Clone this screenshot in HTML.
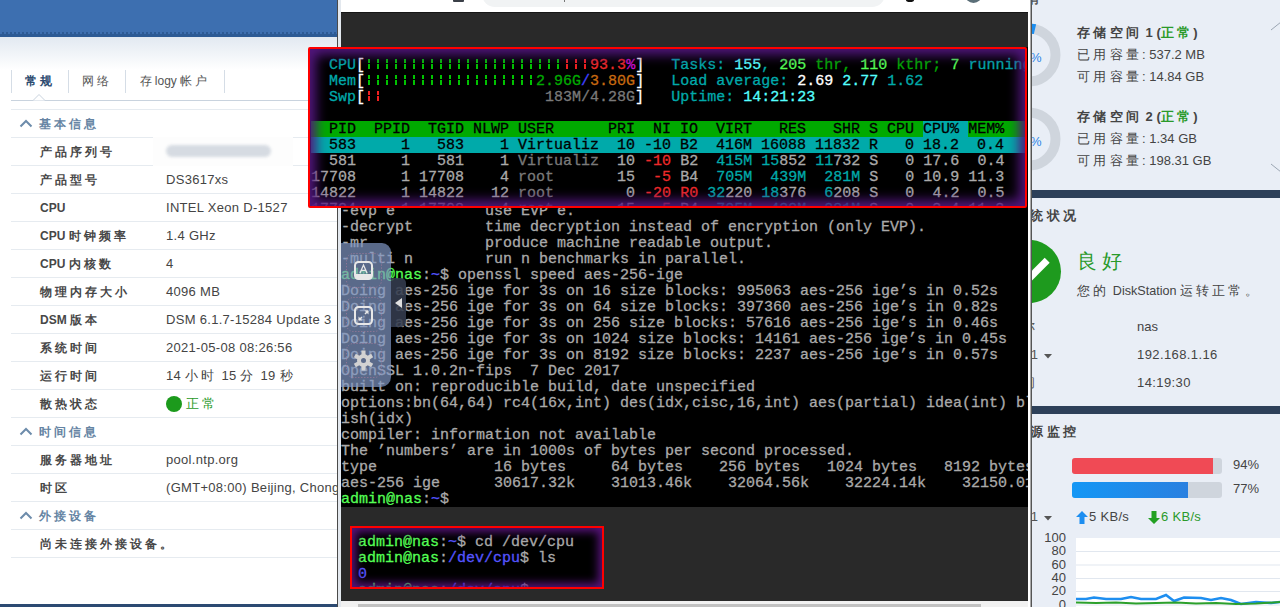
<!DOCTYPE html>
<html><head><meta charset="utf-8">
<style>
*{margin:0;padding:0;box-sizing:border-box}
html,body{width:1280px;height:607px;overflow:hidden;background:#fff;font-family:"Liberation Sans",sans-serif}
.abs{position:absolute}
.c{letter-spacing:0.25em}
/* left panel */
#left{position:absolute;left:0;top:0;width:337px;height:607px;background:#fff;overflow:hidden}
#left .hdr{position:absolute;left:0;top:0;width:337px;height:37px;background:#3d6fb0;border-bottom:3px solid #2c5a94}
#left .dith{position:absolute;left:0;top:32px;width:337px;height:2px;background:repeating-linear-gradient(90deg,#3d6fb0 0 2px,#2c5a94 2px 4px)}
#left .grad{position:absolute;left:0;top:37px;width:337px;height:33px;background:linear-gradient(#e2e9f1,#fff)}
#left .bot{position:absolute;left:0;top:604px;width:337px;height:3px;background:#2c4a72}
.tab{position:absolute;top:70px;height:23px;border-left:1px solid #d5dde6;font-size:12px;line-height:23px;color:#555;text-align:center}
.tabline{position:absolute;left:11px;top:100px;width:327px;height:1px;background:#c9d3de}
.row{position:absolute;left:11px;width:327px;height:28px;border-top:1px solid #e6ebf0;font-size:12px;line-height:27px}
.row .l{position:absolute;left:29px;top:1px;color:#474747;font-weight:bold}
.row .v{position:absolute;left:155px;top:0;color:#444;white-space:nowrap;font-size:13px;letter-spacing:0.3px}
.row.sec .l{left:28px;top:1px;color:#6584a3;font-weight:bold}
.row.sec .car{position:absolute;left:8px;top:9px}
.row .dot{position:absolute;left:155px;top:6px;width:16px;height:16px;border-radius:50%;background:#1c9a1c}
.redact{position:absolute;left:153px;top:137px;width:140px;height:29px;background:#fdfdfd}
.redact .pill{position:absolute;left:13px;top:8px;width:105px;height:12px;border-radius:6px;background:#d6dbe2;filter:blur(1.5px)}
/* terminal */
#term{position:absolute;left:338px;top:0;width:693px;height:607px;background:#f0f0f0}
#term .bl{position:absolute;left:0;top:0;width:3px;height:607px;background:#e3e8ee;border-left:1px solid #4a4a4a}
#term .bl{left:-1px;width:4px}
#term .br{position:absolute;left:690px;top:0;width:3px;height:607px;background:#fff;border-right:1px solid #a9a9a9}
#term .topbar{position:absolute;left:3px;top:0;width:687px;height:12px;background:#fff}
#term .dark{position:absolute;left:3px;top:12px;width:687px;height:589px;background:#292929;border-top:1px solid #161616}
#term .black{position:absolute;left:3px;top:47px;width:687px;height:460px;background:#000}
#term .sb{position:absolute;left:3px;top:602px;width:687px;height:5px;background:#f1f1f1}
#term .thumb{position:absolute;left:20px;top:604px;width:623px;height:3px;background:#c1c1c1}
pre{font-family:"Liberation Mono",monospace;font-size:15px;line-height:16px;white-space:pre;-webkit-text-stroke:0.3px}
#tx{position:absolute;color:#aaa}

#tclip{position:absolute;left:341px;top:47px;width:687px;height:460px;overflow:hidden}
#tclip #tx{left:0;top:157px}
#htop{position:absolute;left:308px;top:47px;width:719px;height:161px;border:2px solid #ff0000;border-radius:2px;background:#000;overflow:hidden}
#htop .hg{position:absolute;left:1px;top:72px;width:720px;height:16px;background:#00aa00}
#htop .hc{position:absolute;left:613px;top:72px;width:45px;height:16px;background:#00aaaa}
#htop .hr1{position:absolute;left:1px;top:88px;width:720px;height:16px;background:#00aaaa}
#htop .bar{position:absolute}
#hp{position:absolute;left:1px;top:9px;color:#aaa}
#htop .glow{position:absolute;left:0;top:0;right:0;bottom:0;box-shadow:inset 0 0 12px 6px rgba(82,22,125,1)}
#pop2{position:absolute;left:350px;top:526px;width:254px;height:63px;border:2px solid #ff0000;background:#000;overflow:hidden}
#p2{position:absolute;left:6px;top:7px;color:#aaa}
#pop2 .glow2{position:absolute;left:0;top:0;right:0;bottom:0;box-shadow:inset 0 0 9px 4px rgba(90,20,125,0.95)}
#tbar{position:absolute;left:341px;top:243px;width:50px;height:144px;background:rgba(128,151,197,0.7);border-radius:0 9px 10px 0}
#ttab{position:absolute;left:391px;top:278px;width:15px;height:49px;background:rgba(52,60,78,0.88);border-radius:0 5px 5px 0}
#topicons{}
/* right */
#right{position:absolute;left:1031px;top:0;width:249px;height:607px;background:#e9eef6;overflow:hidden;border-left:1px solid #555}
#right .rt{position:absolute;white-space:nowrap;font-size:13px;line-height:16px;color:#444}
#right .lab{right:auto;left:auto;color:#555;transform:translateX(-100%);left:6px}
#right .b{font-weight:bold;font-size:13px}
#right .rbar{position:absolute;left:0;width:249px;height:8px;background:#2d4059}
#right .gcirc{position:absolute;left:-34px;top:240px;width:63px;height:63px;border-radius:50%;background:#1e9a1e;overflow:hidden}
#right .gcirc:after{content:"";position:absolute;left:27px;top:26px;width:26px;height:7px;background:#fff;transform:rotate(-45deg)}
#right .pbar{position:absolute;left:40px;width:150px;height:16px;background:#cfd5dd;border-radius:3px;overflow:hidden}
#right .pbar div{height:16px}
#right .chart{position:absolute;left:44px;top:538px;width:205px;height:69px;background:#fff}
#right .ylab{position:absolute;left:0;width:34px;text-align:right;font-size:13px;line-height:14px;color:#444}

</style></head><body>
<div id="left">
  <div class="hdr"></div><div class="dith"></div>
  <div class="grad"></div>
  <div class="tab" style="left:11px;width:57px;color:#2d4b70;font-weight:bold"><span class="c">常规</span></div>
  <div class="tab" style="left:68px;width:57px"><span class="c">网络</span></div>
  <div class="tab" style="left:125px;width:99px"><span class="c">存</span>logy <span class="c">帐户</span></div>
  <div class="tab" style="left:224px;width:1px"></div>
  <div class="tabline"></div>
  <svg class="abs" style="left:28px;top:93px" width="22" height="9" viewBox="0 0 22 9"><path d="M0 7.5 L5 7.5 L11 1.5 L17 7.5 L22 7.5" fill="#fff" stroke="#c9d3de" stroke-width="1"/></svg>
  <div class="row sec" style="top:109px"><svg class="car" width="14" height="9" viewBox="0 0 14 9"><path d="M1.5 7.5 L7 2 L12.5 7.5" fill="none" stroke="#6d8cab" stroke-width="2"/></svg><span class="l"><span class="c">基本信息</span></span></div>
  <div class="row" style="top:137px"><span class="l"><span class="c">产品序列号</span></span></div>
  <div class="row" style="top:165px"><span class="l"><span class="c">产品型号</span></span><span class="v">DS3617xs</span></div>
  <div class="row" style="top:193px"><span class="l">CPU</span><span class="v">INTEL Xeon D-1527</span></div>
  <div class="row" style="top:221px"><span class="l">CPU <span class="c">时钟频率</span></span><span class="v">1.4 GHz</span></div>
  <div class="row" style="top:249px"><span class="l">CPU <span class="c">内核数</span></span><span class="v">4</span></div>
  <div class="row" style="top:277px"><span class="l"><span class="c">物理内存大小</span></span><span class="v">4096 MB</span></div>
  <div class="row" style="top:305px"><span class="l">DSM <span class="c">版本</span></span><span class="v">DSM 6.1.7-15284 Update 3</span></div>
  <div class="row" style="top:333px"><span class="l"><span class="c">系统时间</span></span><span class="v">2021-05-08 08:26:56</span></div>
  <div class="row" style="top:361px"><span class="l"><span class="c">运行时间</span></span><span class="v">14 <span class="c">小时</span> 15 <span class="c">分</span> 19 <span class="c">秒</span></span></div>
  <div class="row" style="top:389px"><span class="l"><span class="c">散热状态</span></span><span class="dot"></span><span class="v" style="left:175px;color:#2a9a2a;letter-spacing:0"><span class="c">正常</span></span></div>
  <div class="row sec" style="top:417px"><svg class="car" width="14" height="9" viewBox="0 0 14 9"><path d="M1.5 7.5 L7 2 L12.5 7.5" fill="none" stroke="#6d8cab" stroke-width="2"/></svg><span class="l"><span class="c">时间信息</span></span></div>
  <div class="row" style="top:445px"><span class="l"><span class="c">服务器地址</span></span><span class="v">pool.ntp.org</span></div>
  <div class="row" style="top:473px"><span class="l"><span class="c">时区</span></span><span class="v">(GMT+08:00) Beijing, Chongqing</span></div>
  <div class="row sec" style="top:501px"><svg class="car" width="14" height="9" viewBox="0 0 14 9"><path d="M1.5 7.5 L7 2 L12.5 7.5" fill="none" stroke="#6d8cab" stroke-width="2"/></svg><span class="l"><span class="c">外接设备</span></span></div>
  <div class="row" style="top:529px"><span class="l"><span class="c">尚未连接外接设备。</span></span></div>
  <div class="row" style="top:557px"></div>
  <div class="redact"><div class="pill"></div></div>
  <div class="bot"></div>
</div>
<div id="term">
  <div class="bl"></div><div class="br"></div>
  <div class="topbar"></div>
  <div class="abs" style="left:115px;top:0;width:11px;height:2px;background:#3a3f47;border-radius:0 0 1px 1px"></div>
  <div class="abs" style="left:144px;top:-20px;width:403px;height:27px;background:#f1f3f4;border-radius:13px"></div>
  <div class="abs" style="left:226px;top:0;width:1px;height:2px;background:#777"></div>
  <div class="abs" style="left:568px;top:-2px;width:8px;height:4px;background:#111;border-radius:50%"></div>
  <div class="abs" style="left:627px;top:-14px;width:17px;height:17px;background:#5b6f78;border-radius:50%"></div>
  
  <div class="dark"></div>
  <div class="black"></div>
  <div class="sb"></div><div class="thumb"></div>
</div>
<div id="tclip"><pre id="tx">-evp e          use EVP e.
-decrypt        time decryption instead of encryption (only EVP).
-mr             produce machine readable output.
-multi n        run n benchmarks in parallel.
<span style="color:#55ff55">admin@nas</span>:<span style="color:#5555ff">~</span>$ openssl speed aes-256-ige
Doing aes-256 ige for 3s on 16 size blocks: 995063 aes-256 ige’s in 0.52s
Doing aes-256 ige for 3s on 64 size blocks: 397360 aes-256 ige’s in 0.82s
Doing aes-256 ige for 3s on 256 size blocks: 57616 aes-256 ige’s in 0.46s
Doing aes-256 ige for 3s on 1024 size blocks: 14161 aes-256 ige’s in 0.45s
Doing aes-256 ige for 3s on 8192 size blocks: 2237 aes-256 ige’s in 0.57s
OpenSSL 1.0.2n-fips  7 Dec 2017
built on: reproducible build, date unspecified
options:bn(64,64) rc4(16x,int) des(idx,cisc,16,int) aes(partial) idea(int) bl
ish(idx)
compiler: information not available
The ’numbers’ are in 1000s of bytes per second processed.
type             16 bytes     64 bytes    256 bytes   1024 bytes   8192 bytes
aes-256 ige      30617.32k    31013.46k    32064.56k    32224.14k    32150.01k
<span style="color:#55ff55">admin@nas</span>:<span style="color:#5555ff">~</span>$
</pre></div>
<div id="htop"><div class="hg"></div><div class="hc"></div><div class="hr1"></div><div class="bar" style="left:55px;top:10px;width:198px;height:4px;background:repeating-linear-gradient(90deg,transparent 0 3px,#00c400 3px 5px,transparent 5px 9px)"></div><div class="bar" style="left:55px;top:15px;width:198px;height:5px;background:repeating-linear-gradient(90deg,transparent 0 3px,#00c400 3px 5px,transparent 5px 9px)"></div><div class="bar" style="left:253px;top:10px;width:27px;height:4px;background:repeating-linear-gradient(90deg,transparent 0 3px,#f02020 3px 5px,transparent 5px 9px)"></div><div class="bar" style="left:253px;top:15px;width:27px;height:5px;background:repeating-linear-gradient(90deg,transparent 0 3px,#f02020 3px 5px,transparent 5px 9px)"></div><div class="bar" style="left:55px;top:26px;width:171px;height:4px;background:repeating-linear-gradient(90deg,transparent 0 3px,#00c400 3px 5px,transparent 5px 9px)"></div><div class="bar" style="left:55px;top:31px;width:171px;height:5px;background:repeating-linear-gradient(90deg,transparent 0 3px,#00c400 3px 5px,transparent 5px 9px)"></div><div class="bar" style="left:55px;top:42px;width:18px;height:4px;background:repeating-linear-gradient(90deg,transparent 0 3px,#f02020 3px 5px,transparent 5px 9px)"></div><div class="bar" style="left:55px;top:47px;width:18px;height:5px;background:repeating-linear-gradient(90deg,transparent 0 3px,#f02020 3px 5px,transparent 5px 9px)"></div><pre id="hp">  <span style="color:#00aaaa">CPU</span><span style="color:#ffffff">[</span><span style="color:#00aa00">                      </span><span style="color:#ee2a2a">   </span><span style="color:#ee2a2a">93.3</span><span style="color:#cc10cc">%</span><span style="color:#ffffff">]</span>   <span style="color:#00aaaa">Tasks:</span> <span style="color:#55ffff">155</span><span style="color:#00aaaa">,</span> <span style="color:#55ff55">205</span> <span style="color:#00aa00">thr,</span> <span style="color:#55ff55">110</span> <span style="color:#00aa00">kthr;</span> <span style="color:#55ff55">7</span> <span style="color:#00aaaa">running</span>
  <span style="color:#00aaaa">Mem</span><span style="color:#ffffff">[</span><span style="color:#00aa00">                   </span><span style="color:#00aa00">2.96G</span><span style="color:#4040ff">/</span><span style="color:#c86a10">3.80G</span><span style="color:#ffffff">]</span>   <span style="color:#00aaaa">Load average:</span> <span style="color:#ffffff">2.69</span> <span style="color:#55ffff">2.77</span> <span style="color:#00aaaa">1.62</span>
  <span style="color:#00aaaa">Swp</span><span style="color:#ffffff">[</span><span style="color:#ee2a2a">  </span>                  <span style="color:#7a7a7a">183M/4.28G</span><span style="color:#ffffff">]</span>   <span style="color:#00aaaa">Uptime:</span> <span style="color:#55ffff">14:21:23</span>

<span style="color:#000">  PID  PPID  TGID NLWP USER      PRI  NI IO  VIRT   RES   SHR S CPU </span><span style="color:#000">CPU%</span><span style="color:#000"> MEM%  </span>
<span style="color:#000">  583     1   583    1 Virtualiz  10 -10 B2  416M 16088 11832 R   0 18.2  0.4  </span>
<span style="color:#aaaaaa">  581     1   581    1 </span><span style="color:#7a7a7a">Virtualiz</span> <span style="color:#aaaaaa"> 10</span> <span style="color:#ee2a2a">-10</span> <span style="color:#aaaaaa">B2</span> <span style="color:#00aaaa"> 415M</span> <span style="color:#00aaaa">15</span><span style="color:#aaaaaa">852</span> <span style="color:#00aaaa">11</span><span style="color:#aaaaaa">732</span> <span style="color:#aaaaaa">S</span> <span style="color:#aaaaaa">  0</span> <span style="color:#aaaaaa">17.6</span> <span style="color:#aaaaaa"> 0.4</span>
<span style="color:#aaaaaa">17708     1 17708    4 </span><span style="color:#7a7a7a">root     </span> <span style="color:#aaaaaa"> 15</span> <span style="color:#ee2a2a"> -5</span> <span style="color:#aaaaaa">B4</span> <span style="color:#00aaaa"> 705M</span> <span style="color:#00aaaa"> 439M</span> <span style="color:#00aaaa"> 281M</span> <span style="color:#aaaaaa">S</span> <span style="color:#aaaaaa">  0</span> <span style="color:#aaaaaa">10.9</span> <span style="color:#aaaaaa">11.3</span>
<span style="color:#aaaaaa">14822     1 14822   12 </span><span style="color:#7a7a7a">root     </span> <span style="color:#aaaaaa">  0</span> <span style="color:#ee2a2a">-20</span> <span style="color:#ee2a2a">R0</span> <span style="color:#00aaaa">32</span><span style="color:#aaaaaa">220</span> <span style="color:#00aaaa">18</span><span style="color:#aaaaaa">376</span>  <span style="color:#00aaaa">6</span><span style="color:#aaaaaa">208</span> <span style="color:#aaaaaa">S</span> <span style="color:#aaaaaa">  0</span> <span style="color:#aaaaaa"> 4.2</span> <span style="color:#aaaaaa"> 0.5</span>
<span style="color:#aaaaaa">17724     1 17708    4 </span><span style="color:#7a7a7a">root     </span> <span style="color:#aaaaaa"> 15</span> <span style="color:#ee2a2a"> -5</span> <span style="color:#aaaaaa">B4</span> <span style="color:#00aaaa"> 705M</span> <span style="color:#00aaaa"> 439M</span> <span style="color:#00aaaa"> 281M</span> <span style="color:#aaaaaa">S</span> <span style="color:#aaaaaa">  0</span> <span style="color:#aaaaaa"> 3.4</span> <span style="color:#aaaaaa">11.3</span></pre><div class="glow"></div></div>
<div id="tbar">
  <svg class="abs" style="left:5px;top:10px" width="36" height="36"><rect x="0.5" y="0.5" width="35" height="34" rx="7" fill="none" stroke="#a07a9a" stroke-width="1" stroke-dasharray="1 2"/></svg>
  <svg class="abs" style="left:13px;top:18px" width="19" height="19" viewBox="0 0 19 19"><rect x="1" y="1" width="17" height="17" rx="3.5" fill="none" stroke="#e8e8e8" stroke-width="2"/><rect x="2" y="13" width="15" height="4" fill="#e8e8e8"/><path d="M6 12 L9.5 4 L13 12 M7.3 9.3 H11.7" fill="none" stroke="#e8e8e8" stroke-width="1.3"/></svg>
  <svg class="abs" style="left:5px;top:54px" width="36" height="36"><rect x="0.5" y="0.5" width="35" height="34" rx="7" fill="none" stroke="#a07a9a" stroke-width="1" stroke-dasharray="1 2"/></svg>
  <svg class="abs" style="left:13px;top:63px" width="19" height="19" viewBox="0 0 19 19"><rect x="1" y="1" width="17" height="17" rx="3.5" fill="none" stroke="#e8e8e8" stroke-width="2"/><path d="M10.5 4.5 H14.5 V8.5 Z M8.5 14.5 H4.5 V10.5 Z" fill="#e8e8e8"/><path d="M14 5 L11 8 M5 14 L8 11" stroke="#e8e8e8" stroke-width="1.5"/></svg>
  <svg class="abs" style="left:5px;top:100px" width="36" height="36"><rect x="0.5" y="0.5" width="35" height="34" rx="7" fill="none" stroke="#a07a9a" stroke-width="1" stroke-dasharray="1 2"/></svg>
  <svg class="abs" style="left:12px;top:107px" width="21" height="21" viewBox="-10.5 -10.5 21 21"><g fill="#d2d2d2"><circle r="6.5"/><rect x="-2" y="-10" width="4" height="5" transform="rotate(0)"/><rect x="-2" y="-10" width="4" height="5" transform="rotate(60)"/><rect x="-2" y="-10" width="4" height="5" transform="rotate(120)"/><rect x="-2" y="-10" width="4" height="5" transform="rotate(180)"/><rect x="-2" y="-10" width="4" height="5" transform="rotate(240)"/><rect x="-2" y="-10" width="4" height="5" transform="rotate(300)"/></g><circle r="2.5" fill="#5a6a8a"/></svg>
</div>
<div id="ttab"><svg class="abs" style="left:4px;top:20px" width="8" height="10"><path d="M7 0 L7 10 L0 5Z" fill="#e0e0e0"/></svg></div>
<div id="tlines"></div>
<div id="pop2"><pre id="p2"><span style="color:#55ff55">admin@nas</span>:<span style="color:#5555ff">~</span>$ cd /dev/cpu
<span style="color:#55ff55">admin@nas</span>:<span style="color:#5555ff">/dev/cpu</span>$ ls
<span style="color:#5555ff">0</span>
<span style="color:#55ff55">admin@nas</span>:<span style="color:#5555ff">/dev/cpu</span>$</pre><div class="glow2"></div></div>

<div id="right">
  <div class="rt" style="left:-4px;top:-9px;font-weight:bold;color:#555;font-size:12px"><span class="c">有</span></div>
  <svg class="abs" style="left:-43px;top:15px" width="80" height="80" viewBox="0 0 80 80"><circle cx="40" cy="40" r="26.5" fill="none" stroke="#cfd5dd" stroke-width="10"/><path d="M40 13.5 A26.5 26.5 0 0 1 46 14.2" fill="none" stroke="#1d8ef0" stroke-width="10"/></svg>
  <div class="rt" style="left:-2px;top:50px;color:#2f86e8;font-size:13px">%</div>
  <svg class="abs" style="left:-43px;top:99px" width="80" height="80" viewBox="0 0 80 80"><circle cx="40" cy="40" r="26.5" fill="none" stroke="#cfd5dd" stroke-width="10"/></svg>
  <div class="rt" style="left:-2px;top:134px;color:#2f86e8;font-size:13px">%</div>
  <div class="rt b" style="left:45px;top:25px"><span class="c">存储空间</span> 1 (<span style="color:#2a9a2a"><span class="c">正常</span></span>)</div>
  <div class="rt" style="left:45px;top:47px"><span class="c">已用容量</span>: 537.2 MB</div>
  <div class="rt" style="left:45px;top:69px"><span class="c">可用容量</span>: 14.84 GB</div>
  <div class="rt b" style="left:45px;top:109px"><span class="c">存储空间</span> 2 (<span style="color:#2a9a2a"><span class="c">正常</span></span>)</div>
  <div class="rt" style="left:45px;top:131px"><span class="c">已用容量</span>: 1.34 GB</div>
  <div class="rt" style="left:45px;top:153px"><span class="c">可用容量</span>: 198.31 GB</div>
  <svg class="abs" style="left:237px;top:18px" width="12" height="14"><path d="M2 12 L12 4" stroke="#9aa5b3" stroke-width="1"/></svg>
  <svg class="abs" style="left:237px;top:162px" width="12" height="14"><path d="M2 2 L12 10" stroke="#9aa5b3" stroke-width="1"/></svg>
  <div class="rbar" style="top:190px"></div>
  <div class="rt b" style="left:-18px;top:208px;font-size:13px"><span class="c">系统状况</span></div>
  <div class="gcirc"></div>
  <div class="rt" style="left:45px;top:249px;font-size:20px;color:#2a9a2a;line-height:24px"><span class="c">良好</span></div>
  <div class="rt" style="left:45px;top:283px;font-size:12.6px"><span class="c">您的</span> DiskStation <span class="c">运转正常。</span></div>
  <div class="rt lab" style="top:319px"><span class="c">名称</span></div>
  <div class="rt" style="left:105px;top:319px">nas</div>
  <div class="rt lab" style="top:347px"><span class="c">局域网</span> 1</div>
  <svg class="abs" style="left:12px;top:354px" width="8" height="5"><path d="M0 0 L8 0 L4 4.5Z" fill="#555"/></svg>
  <div class="rt" style="left:105px;top:347px;letter-spacing:0.4px">192.168.1.16</div>
  <div class="rt lab" style="top:375px"><span class="c">运行时间</span></div>
  <div class="rt" style="left:105px;top:375px;letter-spacing:0.4px">14:19:30</div>
  <div class="rbar" style="top:406px"></div>
  <div class="rt b" style="left:-18px;top:424px;font-size:13px"><span class="c">资源监控</span></div>
  <div class="pbar" style="top:458px"><div style="width:141px;background:#f04a55"></div></div>
  <div class="rt" style="left:201px;top:457px;font-size:13px">94%</div>
  <div class="pbar" style="top:482px"><div style="width:116px;background:linear-gradient(90deg,#1497f5,#2a80e0)"></div></div>
  <div class="rt" style="left:201px;top:481px;font-size:13px">77%</div>
  <div class="rt lab" style="top:509px"><span class="c">局域网</span> 1</div>
  <svg class="abs" style="left:12px;top:516px" width="8" height="5"><path d="M0 0 L8 0 L4 4.5Z" fill="#555"/></svg>
  <svg class="abs" style="left:44px;top:511px" width="12" height="13"><path d="M6 0 L12 6 L8.5 6 L8.5 13 L3.5 13 L3.5 6 L0 6Z" fill="#1d8ef0"/></svg>
  <div class="rt" style="left:57px;top:509px;font-size:13px;letter-spacing:0.3px">5 KB/s</div>
  <svg class="abs" style="left:116px;top:511px" width="12" height="13"><path d="M6 13 L12 7 L8.5 7 L8.5 0 L3.5 0 L3.5 7 L0 7Z" fill="#22a022"/></svg>
  <div class="rt" style="left:129px;top:509px;font-size:13px;color:#2a9a2a;letter-spacing:0.3px">6 KB/s</div>
  <div class="chart"></div>
  <div class="ylab" style="top:531px">100</div>
  <div class="ylab" style="top:544px">80</div>
  <div class="ylab" style="top:558px">60</div>
  <div class="ylab" style="top:571px">40</div>
  <div class="ylab" style="top:584px">20</div>
  <div class="ylab" style="top:598px">0</div>
  <svg class="abs" style="left:44px;top:538px" width="205" height="69"><g stroke="#e1e7ef" stroke-width="1"><path d="M0 13.5H205M0 27H205M0 40.5H205M0 53.5H205M0 67H205"/></g>
  <path d="M0 61 L10 61 L18 59.5 L30 61 L45 61 L55 59 L65 61 L80 61 L90 57 L98 63 L108 59.5 L125 60 L135 62 L145 60 L155 62 L165 66 L180 64 L195 65 L205 64" fill="none" stroke="#1d8ef0" stroke-width="2.5"/>
  <path d="M0 64.5 L20 65 L40 64.5 L60 65.5 L80 65 L100 64.5 L120 65.5 L140 65 L160 66 L180 65.5 L205 64" fill="none" stroke="#2ca02c" stroke-width="2"/></svg>
</div>
</body></html>
